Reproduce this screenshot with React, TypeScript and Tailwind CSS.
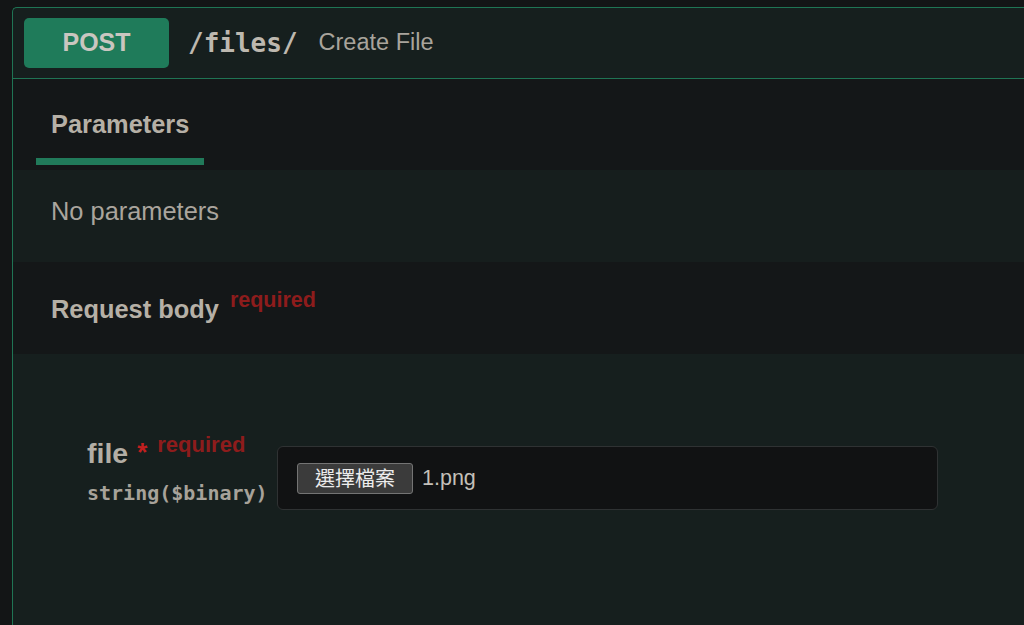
const sans = { fontFamily: '"Liberation Sans", Arial, sans-serif' };

export default function App() {
  return (
    <div
      className="min-h-[625px] w-[1024px] overflow-hidden bg-[#131516] pl-[12px] pt-[7px]"
      style={sans}
    >
      <div className="flex h-[618px] flex-col rounded-tl-[5px] border-l border-t border-[#1f7454] bg-[#161f1e]">
        {/* summary */}
        <div className="flex h-[71px] shrink-0 items-center border-b border-[#1f7454] pl-[11px]">
          <div className="flex h-[50px] w-[145px] items-center justify-center rounded-[5px] bg-[#1f7b5a] text-[25px] font-bold text-[#c9c6c0]">
            POST
          </div>
          <span className="ml-[19px] font-['DejaVu_Sans_Mono',monospace] text-[26px] font-bold text-[#bdb8af]">
            /files/
          </span>
          <span className="ml-[21px] text-[23.5px] text-[#a9a49c]">Create File</span>
        </div>

        {/* tabs */}
        <div className="h-[91px] shrink-0 bg-[#141718] pl-[23px] pt-[29px]">
          <div className="w-[168px]">
            <div className="pl-[15px] text-[25.4px] font-bold leading-[32px] text-[#b6b0a6]">
              Parameters
            </div>
            <div className="mt-[18px] h-[7px] bg-[#217a5a]" />
          </div>
        </div>

        <div className="h-[92px] shrink-0 bg-[#161e1d] pl-[38px] pt-[27px]">
          <div className="text-[25.4px] leading-[29px] text-[#aaa59d]">No parameters</div>
        </div>

        {/* request body */}
        <div className="flex h-[92px] shrink-0 items-start bg-[#141718] pl-[38px] pt-[26px]">
          <span className="mt-[7px] text-[25.4px] font-bold leading-[29px] text-[#b6b0a6]">
            Request body
          </span>
          <span className="ml-[11px] text-[21.5px] font-bold leading-[24px] text-[#8e1c1c]">
            required
          </span>
        </div>

        <div className="flex flex-1 items-start bg-[#161f1e] pl-[74px] pt-[78px]">
          <div className="w-[190px] shrink-0">
            <div className="flex items-start">
              <span className="mt-[5px] text-[28.5px] font-bold leading-[32px] text-[#b3aea5]">
                file
              </span>
              <span className="ml-[9px] mt-[6px] text-[26px] font-bold leading-[28px] text-[#c21f1f]">
                *
              </span>
              <span className="ml-[10px] text-[22px] font-bold leading-[25px] text-[#8e1c1c]">
                required
              </span>
            </div>
            <div className="mt-[12px] font-['DejaVu_Sans_Mono',monospace] text-[20px] font-bold leading-[24px] text-[#a7a29a]">
              string($binary)
            </div>
          </div>
          <div className="mt-[14px] flex h-[64px] w-[661px] items-center rounded-[6px] border border-[#2f3233] bg-[#111213] pl-[19px]">
            <div
              className="flex h-[31px] w-[116px] items-center justify-center rounded-[3px] border border-[#747474] bg-[#3b3b3b] text-[20px] text-[#ececec]"
              style={{ fontFamily: '"Noto Sans CJK TC", "Noto Sans CJK SC", sans-serif' }}
            >
              選擇檔案
            </div>
            <span className="ml-[9px] text-[21.5px] text-[#c4c0b9]">1.png</span>
          </div>
        </div>
      </div>
    </div>
  );
}
